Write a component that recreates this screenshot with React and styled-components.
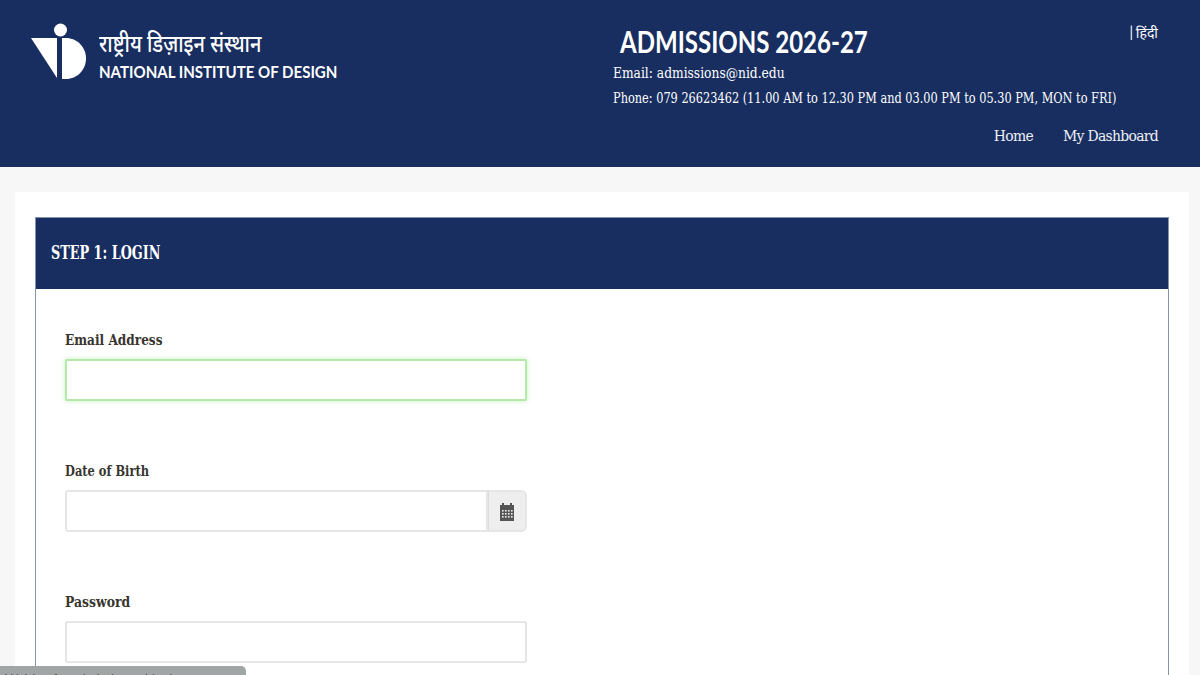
import React from "react";
import styled, { createGlobalStyle } from "styled-components";

const NAVY = "#182e60";
const SLAB = `"DejaVu Serif Condensed", "DejaVu Serif", "Liberation Serif", serif`;
const HINDI = `"Noto Sans Devanagari", "Noto Serif Devanagari", "Lohit Devanagari", "Noto Sans", sans-serif`;

const GlobalStyle = createGlobalStyle`
  html, body {
    margin: 0;
    height: 675px;
    overflow: hidden;
    background: #f7f7f7;
    font-family: ${SLAB};
  }
  * {
    box-sizing: border-box;
  }
`;

// none of the installed fonts are as narrow as the original ones
const Narrow = styled.span`
  display: inline-block;
  white-space: nowrap;
  transform: scaleX(${({ $x }) => $x});
  transform-origin: left center;
`;

const Header = styled.header`
  background: ${NAVY};
  height: 167px;
  padding: 0 42px 0 30px;
  display: flex;
  justify-content: space-between;
  color: #fff;
`;

const Brand = styled.div`
  display: flex;
  gap: 13px;
  padding-top: 22px;
`;

const BrandText = styled.div`
  display: flex;
  flex-direction: column;
  padding-top: 10px;
  width: 240px;
`;

const BrandHindi = styled.span`
  font-family: ${HINDI};
  font-size: 24px;
  font-weight: 500;
  line-height: 29px;
`;

const BrandEnglish = styled.span`
  font-family: "Lato", sans-serif;
  font-size: 17.5px;
  font-weight: 700;
  line-height: 22px;
`;

const Contact = styled.div`
  width: 545px;
  display: flex;
  flex-direction: column;
`;

const TopRow = styled.div`
  display: flex;
  justify-content: space-between;
  padding: 22px 0 0 7px;
`;

const Title = styled.h1`
  margin: 0;
  font-family: "Lato", sans-serif;
  font-size: 31px;
  font-weight: 700;
  line-height: 39px;
`;

const LangLink = styled.a`
  font-family: ${HINDI};
  font-size: 14px;
  line-height: 20px;
  margin-top: 3px;
`;

const ContactLine = styled.div`
  font-size: 15px;
  line-height: 25px;
`;

const Nav = styled.nav`
  display: flex;
  justify-content: flex-end;
  gap: 30px;
  margin-top: 13px;
`;

const NavLink = styled.a`
  font-size: 15.5px;
  font-weight: 300;
  letter-spacing: -0.7px;
  line-height: 24px;
  color: #eef0f5;
`;

const Page = styled.main`
  padding: 25px 11px 0 15px;
`;

const Sheet = styled.div`
  background: #fff;
  padding: 25px 20px 0;
  height: 483px;
  overflow: hidden;
`;

const Panel = styled.section`
  border: 1px solid #8494ae;
  border-bottom: 0;
  height: 100%;
  overflow: hidden;
`;

const PanelHeading = styled.h2`
  margin: 0;
  background: ${NAVY};
  color: #fff;
  height: 71px;
  padding: 0 0 3px 15px;
  display: flex;
  align-items: center;
  font-size: 18px;
  font-weight: 700;
`;

const Form = styled.form`
  padding: 38px 0 0 29px;
  width: 491px;
`;

const Field = styled.div`
  height: 131px;
`;

const Label = styled.label`
  display: block;
  font-size: 15.5px;
  font-weight: 700;
  line-height: 22px;
  height: 32px;
  padding-top: 2px;
  color: #38352f;
`;

const Input = styled.input`
  display: block;
  width: 100%;
  flex: 1;
  height: 42px;
  background: #fff;
  outline: none;
  border: 2px solid ${({ $focused }) => ($focused ? "#b4e9a8" : "#e6e6e6")};
  border-radius: ${({ $joined }) => ($joined ? "3px 0 0 3px" : "2px")};
  box-shadow: ${({ $focused }) => ($focused ? "0 0 5px #c4f1ba" : "none")};
`;

const InputGroup = styled.div`
  display: flex;
`;

const Addon = styled.span`
  width: 39px;
  height: 42px;
  display: flex;
  align-items: center;
  justify-content: center;
  background: #eeeeee;
  border: 2px solid #e6e6e6;
  border-left: 1px solid #dcdcdc;
  border-radius: 0 6px 6px 0;
`;

const StatusBubble = styled.div`
  position: fixed;
  left: 0;
  bottom: 0;
  width: 246px;
  height: 9px;
  overflow: hidden;
  background: #a1a5a6;
  border-top-right-radius: 5px;
  color: #555;
  font-family: "Lato", sans-serif;
  font-size: 13px;
  line-height: 14px;
  padding: 6px 0 0 5px;
  white-space: nowrap;
`;

const LogoMark = () => (
  <svg width="56" height="58" viewBox="0 0 56 58" fill="#fff">
    <circle cx="30.5" cy="8" r="6.5" />
    <path d="M1 16H27V56Z" />
    <path d="M32 16H36C47 16 56 25 56 36.5S47 57 36 57H32Z" />
  </svg>
);

const CalendarIcon = () => (
  <svg width="14" height="19" viewBox="0 0 14 19">
    <path fill="#555" d="M0 3H2V1H4V3H10V1H12V3H14V19H0Z" />
    <g fill="#eee">
      {[8, 11, 14].map((y) =>
        [2, 5, 8, 11].map((x) => (
          <rect key={`${x}_${y}`} x={x} y={y} width="1.6" height="1.6" />
        ))
      )}
    </g>
  </svg>
);

const App = () => {
  return (
    <>
      <GlobalStyle />
      <Header>
        <Brand>
          <LogoMark />
          <BrandText>
            <BrandHindi>
              <Narrow $x={0.83}>राष्ट्रीय डिज़ाइन संस्थान</Narrow>
            </BrandHindi>
            <BrandEnglish>
              <Narrow $x={0.86}>NATIONAL INSTITUTE OF DESIGN</Narrow>
            </BrandEnglish>
          </BrandText>
        </Brand>
        <Contact>
          <TopRow>
            <Title>
              <Narrow $x={0.775}>ADMISSIONS 2026-27</Narrow>
            </Title>
            <LangLink>|&#8202;हिंदी</LangLink>
          </TopRow>
          <ContactLine>
            <Narrow $x={0.91}>Email: admissions@nid.edu</Narrow>
          </ContactLine>
          <ContactLine>
            <Narrow $x={0.84}>
              Phone: 079 26623462 (11.00 AM to 12.30 PM and 03.00 PM to 05.30
              PM, MON to FRI)
            </Narrow>
          </ContactLine>
          <Nav>
            <NavLink>Home</NavLink>
            <NavLink>My Dashboard</NavLink>
          </Nav>
        </Contact>
      </Header>
      <Page>
        <Sheet>
          <Panel>
            <PanelHeading>
              <Narrow $x={0.79}>STEP 1: LOGIN</Narrow>
            </PanelHeading>
            <Form>
              <Field>
                <Label>
                  <Narrow $x={0.87}>Email Address</Narrow>
                </Label>
                <Input $focused />
              </Field>
              <Field>
                <Label>
                  <Narrow $x={0.82}>Date of Birth</Narrow>
                </Label>
                <InputGroup>
                  <Input $joined />
                  <Addon>
                    <CalendarIcon />
                  </Addon>
                </InputGroup>
              </Field>
              <Field>
                <Label>
                  <Narrow $x={0.89}>Password</Narrow>
                </Label>
                <Input type="password" />
              </Field>
            </Form>
          </Panel>
        </Sheet>
      </Page>
      <StatusBubble>Waiting for admissions.nid.edu...</StatusBubble>
    </>
  );
};

export default App;
